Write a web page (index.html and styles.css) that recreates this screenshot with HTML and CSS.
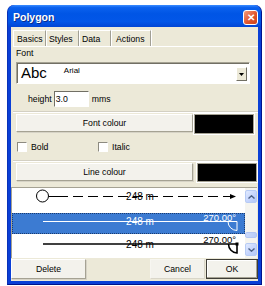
FILE: index.html
```html
<!DOCTYPE html>
<html>

<head>
    <meta charset="UTF-8">
    <title>Polygon</title>
    <link rel="stylesheet" href="styles.css">
</head>

<body>

    <div class="window">
        <div class="titlebar">
            <span class="title">Polygon</span>
            <span class="close">&#x2715;</span>
        </div>

        <div class="client">
            <ul class="tabs">
                <li class="tab-basics">Basics</li>
                <li class="tab-styles">Styles</li>
                <li class="tab-data">Data</li>
                <li class="tab-actions">Actions</li>
            </ul>

            <div class="pane">
                <p class="label">Font</p>
                <div class="combo">
                    <span class="sample">Abc</span>
                    <span class="face">Arial</span>
                    <span class="drop"><svg width="5" height="3" viewBox="0 0 5 3"><path d="M0 0h5L2.5 3z" fill="#000"/></svg></span>
                </div>

                <div class="height-row">
                    <span>height</span>
                    <span class="field">3.0</span>
                    <span>mms</span>
                </div>

                <div class="group">
                    <div class="colour-row">
                        <span class="btn wide">Font colour</span>
                        <span class="swatch"></span>
                    </div>
                </div>

                <div class="checks">
                    <label class="check"><span class="box"></span>Bold</label>
                    <label class="check"><span class="box"></span>Italic</label>
                </div>

                <div class="group">
                    <div class="colour-row line">
                        <span class="btn wide">Line colour</span>
                        <span class="swatch"></span>
                    </div>
                </div>
            </div>

            <div class="list">
                <div class="rows">
                    <div class="row">
                        <svg width="232" height="25" viewBox="0 0 232 25">
                            <line x1="37" y1="8.5" x2="46" y2="8.5" stroke="#000" stroke-width="1"/>
                            <line x1="46" y1="8.5" x2="218" y2="8.5" stroke="#000" stroke-width="1" stroke-dasharray="10 5"/>
                            <line x1="214" y1="8.5" x2="220" y2="8.5" stroke="#000" stroke-width="1"/>
                            <path d="M218 6L224 8.5L218 11z" fill="#000"/>
                            <circle cx="30.5" cy="8" r="6" fill="#fff" stroke="#000" stroke-width="1"/>
                            <text x="128" y="12" class="len">248 m</text>
                        </svg>
                    </div>
                    <div class="row sel">
                        <svg width="232" height="21" viewBox="0 0 232 21">
                            <line x1="31" y1="8.5" x2="225" y2="8.5" stroke="#fff" stroke-width="1"/>
                            <text x="128" y="11.5" class="len" fill="#fff">248 m</text>
                            <text x="224" y="8" class="ang" fill="#fff">270.00°</text>
                            <path d="M216 8.5A9 9 0 0 0 225 17.5V8.5" fill="none" stroke="#fff" stroke-width="1"/>
                        </svg>
                    </div>
                    <div class="row">
                        <svg width="232" height="24" viewBox="0 0 232 24">
                            <line x1="31" y1="10" x2="225" y2="10" stroke="#000" stroke-width="1.5"/>
                            <text x="128" y="13.5" class="len">248 m</text>
                            <text x="224" y="9" class="ang">270.00°</text>
                            <path d="M216.5 10A9 9 0 0 0 225 19V11" fill="none" stroke="#000" stroke-width="1.6"/>
                            <rect x="223.5" y="8.5" width="3" height="3" fill="#000"/>
                        </svg>
                    </div>
                </div>
                <div class="scrollbar">
                    <span class="sb-btn"><svg width="7" height="4" viewBox="0 0 7 4"><path d="M0.5 3.5L3.5 0.8L6.5 3.5" fill="none" stroke="#4d6185" stroke-width="1.4"/></svg></span>
                    <span class="sb-track"></span>
                    <span class="sb-thumb"></span>
                    <span class="sb-gap"></span>
                    <span class="sb-btn"><svg width="7" height="4" viewBox="0 0 7 4"><path d="M0.5 0.5L3.5 3.2L6.5 0.5" fill="none" stroke="#4d6185" stroke-width="1.4"/></svg></span>
                </div>
            </div>

            <div class="buttons">
                <span class="btn delete">Delete</span>
                <span class="spacer"></span>
                <span class="btn cancel">Cancel</span>
                <span class="btn ok">OK</span>
            </div>
        </div>
    </div>

</body>

</html>
```

FILE: styles.css
```css
* {
    margin: 0;
    padding: 0;
    box-sizing: border-box;
}

body {
    background: #ffffff;
    font-family: "Liberation Sans", Arial, sans-serif;
    font-size: 8.7px;
    color: #000000;
}

.window {
    margin: 5px 0 0 7px;
    width: 255px;
    height: 280px;
    background: #0a3fd6;
    border-radius: 7px 7px 0 0;
    display: flex;
    flex-direction: column;
    border-left: 1px solid #0831b8;
    border-right: 1px solid #00138c;
    border-bottom: 1px solid #00138c;
}

.titlebar {
    height: 22px;
    display: flex;
    align-items: center;
    justify-content: space-between;
    padding: 0 3px 0 5px;
    border-radius: 7px 7px 0 0;
    background: linear-gradient(#3a8cff 0%, #0b61ee 12%, #0055e5 40%, #0256e8 75%, #0145d4 100%);
}

.title {
    color: #ffffff;
    font-weight: bold;
    font-size: 10.5px;
    text-shadow: 1px 1px 0 #0a2b8a;
    margin-top: 1px;
}

.close {
    width: 15px;
    height: 15px;
    margin-top: 2px;
    border: 1px solid #ffffff;
    border-radius: 3px;
    background: linear-gradient(135deg, #f39c7c 0%, #e0562e 55%, #c9411c 100%);
    color: #ffffff;
    font-size: 10px;
    font-weight: bold;
    line-height: 13px;
    text-align: center;
}

.client {
    flex: 1;
    margin: 0 3px 3px 3px;
    background: #ece9d8;
    display: flex;
    flex-direction: column;
}

.tabs {
    list-style: none;
    display: flex;
    margin: 3px 0 0 2px;
    height: 17px;
    border-bottom: 1px solid #ffffff;
}

.tabs li {
    height: 16px;
    line-height: 16px;
    padding-left: 3px;
    border-right: 1px solid #a19f94;
    box-shadow: 1px 0 0 #ffffff;
    border-top: 1px solid #ffffff;
}

.tabs li:first-child {
    border-left: 1px solid #ffffff;
}

.tab-basics { width: 33px; }
.tab-styles { width: 33px; }
.tab-data { width: 32px; }
.tab-actions { width: 40px; padding-left: 5px !important; }

.pane {
    padding: 1px 0 0 5px;
    height: 135px;
}

.label {
    height: 11px;
    line-height: 11px;
}

.combo {
    margin-top: 3px;
    width: 234px;
    height: 22px;
    background: #ffffff;
    border: 1px solid;
    border-color: #a5a293 #ffffff #ffffff #a5a293;
    box-shadow: inset 1px 1px 0 #716f64;
    display: flex;
    align-items: flex-start;
    position: relative;
}

.sample {
    font-size: 15px;
    line-height: 18px;
    margin: 1px 0 0 4px;
}

.face {
    font-size: 8px;
    margin: 3px 0 0 17px;
}

.drop {
    position: absolute;
    right: 2px;
    top: 4px;
    width: 11px;
    height: 14px;
    background: #ece9d8;
    border: 1px solid;
    border-color: #ffffff #716f64 #716f64 #ffffff;
    display: flex;
    align-items: center;
    justify-content: center;
}

.height-row {
    display: flex;
    align-items: center;
    margin: 7px 0 0 12px;
    height: 16px;
}

.field {
    width: 35px;
    height: 16px;
    margin: 0 3px 0 2px;
    background: #ffffff;
    border: 1px solid;
    border-color: #716f64 #ffffff #ffffff #716f64;
    padding-left: 1px;
    line-height: 14px;
}

.group {
    margin: 4px 0 0 -3px;
    width: 245px;
    border-top: 1px solid #d3d0c3;
    box-shadow: inset 0 1px 0 #ffffff;
    padding: 2px 0 0 3px;
}

.colour-row {
    display: flex;
    align-items: flex-start;
    height: 20px;
}

.btn {
    display: flex;
    align-items: center;
    justify-content: center;
    background: #f3f2ec;
    border: 1px solid;
    border-color: #ffffff #a5a293 #a5a293 #ffffff;
    box-shadow: 1px 1px 0 #d6d3c6;
}

.wide {
    width: 177px;
    height: 18px;
}

.swatch {
    width: 60px;
    height: 20px;
    margin-left: 1px;
    background: #000000;
    border: 1px solid #a5a293;
    box-shadow: 0 0 0 1px #ffffff;
}

.line .swatch {
    margin-left: 4px;
    height: 19px;
}

.checks {
    display: flex;
    margin: 7px 0 0 1px;
    height: 12px;
}

.check {
    display: flex;
    align-items: center;
    width: 81px;
}

.box {
    width: 10px;
    height: 10px;
    margin-right: 4px;
    background: #ffffff;
    border: 1px solid;
    border-color: #8d8b80 #ffffff #ffffff #8d8b80;
}

.checks + .group {
    margin-top: 7px;
}

.list {
    margin: 5px 1px 0 0;
    height: 71px;
    display: flex;
    background: #ffffff;
    border-top: 1px solid #a5a293;
    border-left: 1px solid #a5a293;
    overflow: hidden;
}

.rows {
    width: 233px;
    display: flex;
    flex-direction: column;
}

.row {
    flex: none;
}

.row svg {
    display: block;
    overflow: visible;
}

.sel {
    background: #3c7bd2;
    outline: 1px dotted #1b3b6e;
    outline-offset: -1px;
}

.len {
    font-family: "Liberation Sans", Arial, sans-serif;
    font-size: 10px;
    text-anchor: middle;
}

.ang {
    font-family: "Liberation Sans", Arial, sans-serif;
    font-size: 9.5px;
    text-anchor: end;
}

.scrollbar {
    width: 12px;
    display: flex;
    flex-direction: column;
    background: #f5f4ef;
    padding-top: 2px;
}

.sb-btn {
    height: 13px;
    border-radius: 2px;
    background: linear-gradient(135deg, #e1eafe 0%, #c3d3fd 60%, #b4c8f6 100%);
    border: 1px solid #b7cbf5;
    display: flex;
    align-items: center;
    justify-content: center;
}

.sb-track {
    height: 29px;
}

.sb-thumb {
    height: 6px;
    border-radius: 2px;
    background: linear-gradient(90deg, #cad8fb, #b9cdf8);
    border: 1px solid #b3c6f3;
}

.sb-gap {
    height: 5px;
}

.buttons {
    display: flex;
    margin-top: 1px;
    height: 20px;
}

.delete {
    width: 75px;
}

.spacer {
    flex: 1;
}

.cancel {
    width: 55px;
    border-color: #f7f6f1 #d9d6c9 #d9d6c9 #f7f6f1;
    box-shadow: none;
}

.ok {
    width: 52px;
    margin-left: 1px;
    border: 1px solid #3e3d37;
    box-shadow: inset -1px -1px 0 #a5a293, inset 1px 1px 0 #ffffff;
}
```
